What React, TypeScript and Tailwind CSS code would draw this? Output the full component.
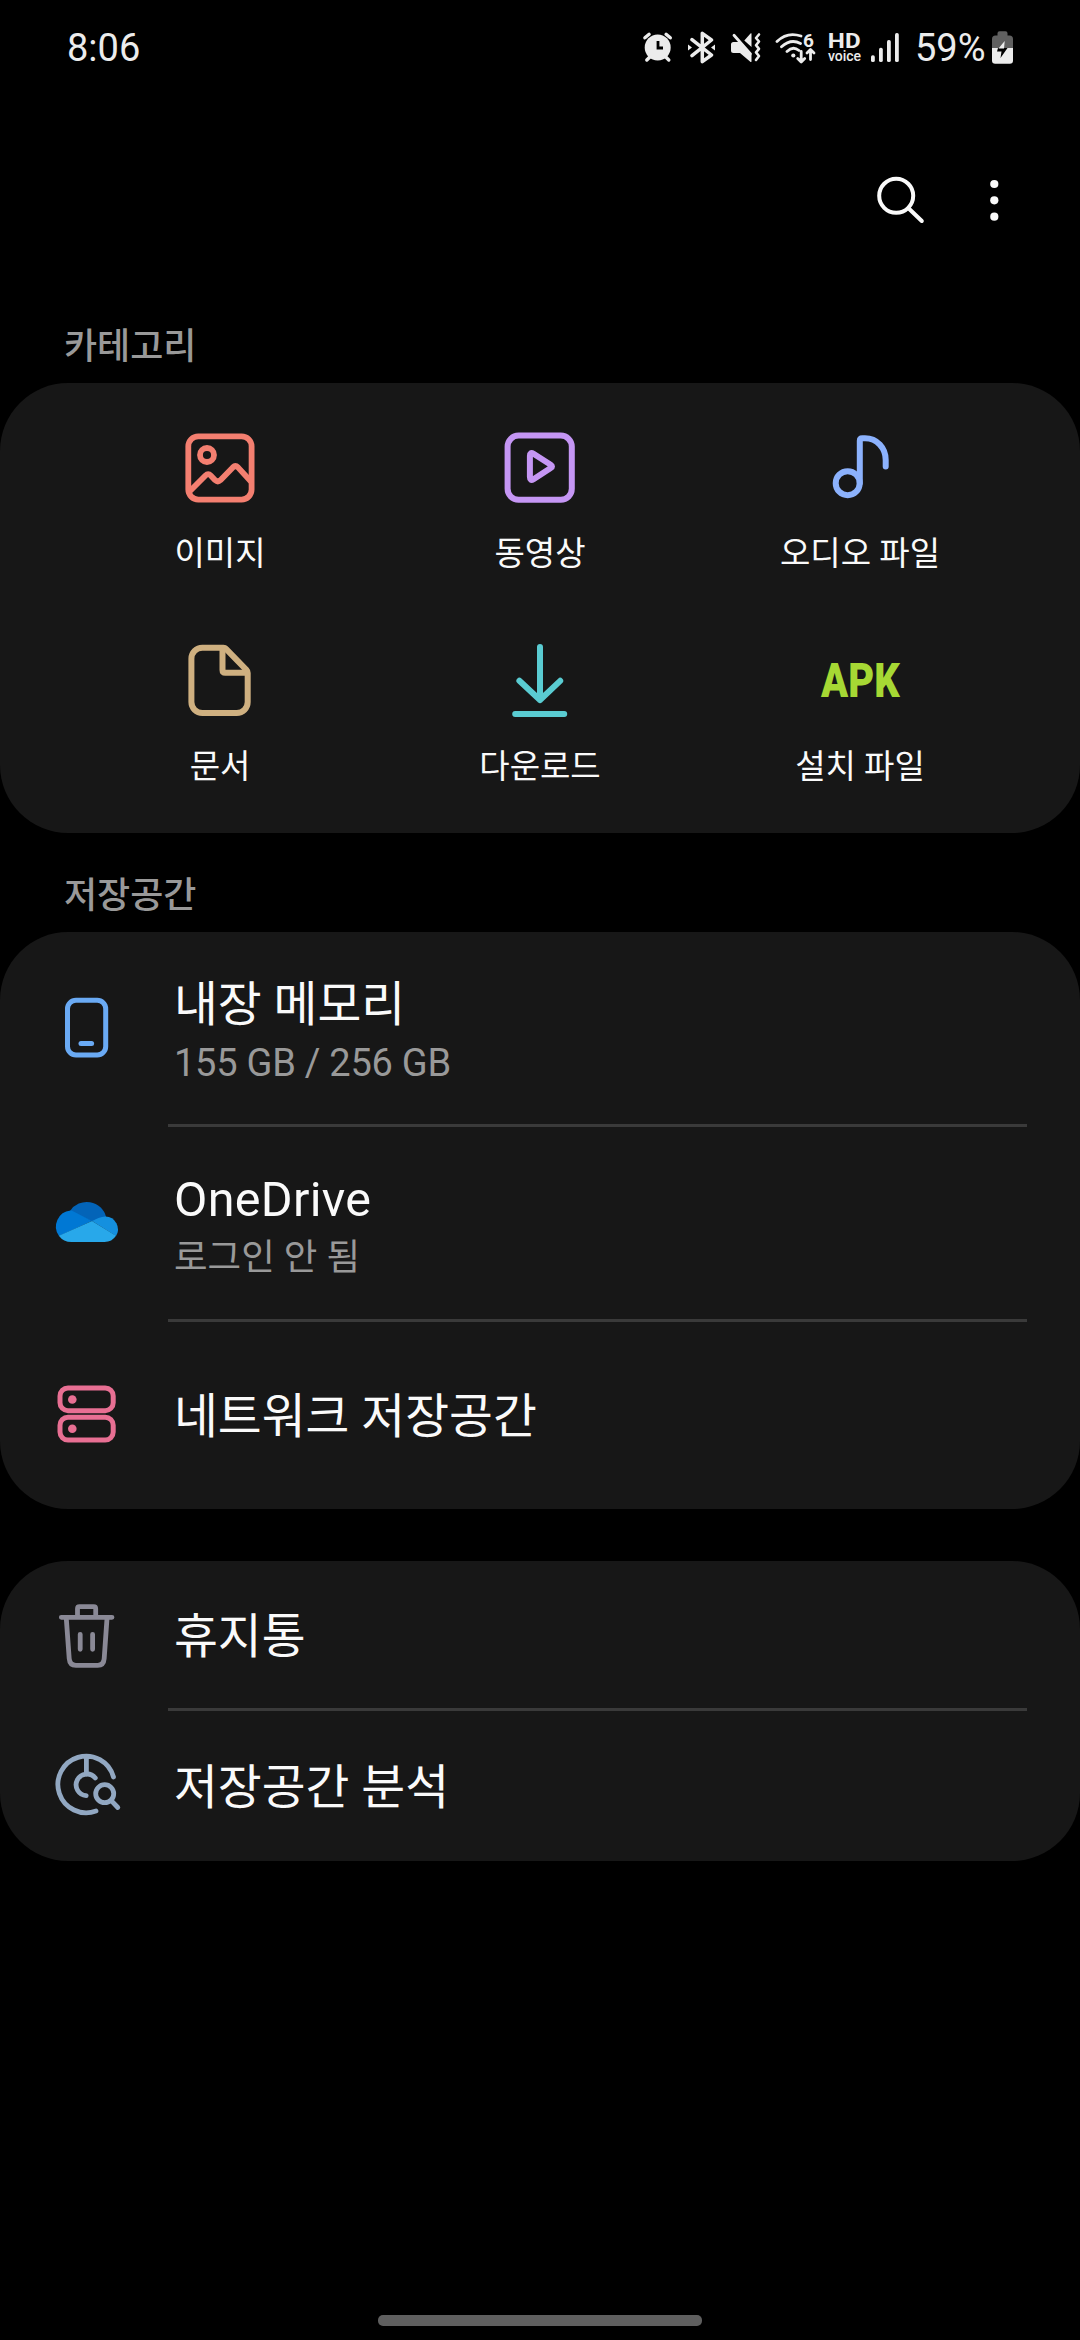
import React from 'react';

type CategoryItem = { label: string; icon: React.ReactNode };

const stroke = {
  fill: 'none',
  stroke: 'currentColor',
  strokeLinecap: 'round',
  strokeLinejoin: 'round',
} as const;

const categories: CategoryItem[] = [
  {
    label: '이미지',
    icon: (
      <svg className="size-[90px] text-[#f47f70]" viewBox="0 0 90 90" {...stroke} strokeWidth={5.8}>
        <rect x="13.3" y="13.3" width="63.3" height="63.3" rx="10" />
        <circle cx="32" cy="32" r="7" />
        <path d="M15 68L30.5 52.5q2.700-2.600 5.200 0l4.500 4.700q2.600 2.400 5.200 0L57.800 44.400q2.600-2.500 5.200 0L75.500 58" />
      </svg>
    ),
  },
  {
    label: '동영상',
    icon: (
      <svg className="size-[90px] text-[#c596f4]" viewBox="0 0 90 90" {...stroke} strokeWidth={6}>
        <rect x="12.6" y="12.6" width="64.2" height="64.2" rx="11" />
        <path d="M34.9 33v21q0 4.400 3.600 2.200l17.200-11.200q2.600-1.600 0-3.200L38.500 30.700q-3.600-2.200-3.600 2.300z" />
      </svg>
    ),
  },
  {
    label: '오디오 파일',
    icon: (
      <svg className="size-[90px] text-[#8cb2fd]" viewBox="0 0 90 90" {...stroke} strokeWidth={6}>
        <circle cx="32.7" cy="60.2" r="12" />
        <path d="M44.8 60V17.8q0-2.500 2.500-2.500H50C62 15.300 70.700 25 70.700 37v6.600" />
      </svg>
    ),
  },
  {
    label: '문서',
    icon: (
      <svg className="size-[90px] text-[#cfb080]" viewBox="0 0 90 90" {...stroke} strokeWidth={6}>
        <path d="M48.5 11.7H27.4a11 11 0 0 0-11 11V66a11 11 0 0 0 11 11h34.3a11 11 0 0 0 11-11V37q0-1.800-1.300-3.200L51 12.800q-1-1.100-2.500-1.100z" />
        <path d="M47.5 13v21q0 2.800 2.800 2.800H71" />
      </svg>
    ),
  },
  {
    label: '다운로드',
    icon: (
      <svg className="size-[90px] text-[#5accd2]" viewBox="0 0 90 90" {...stroke} strokeWidth={6}>
        <path d="M45 11v53M24.4 44.800L45 64l20.200-19.200M20.200 78h49" />
      </svg>
    ),
  },
  {
    label: '설치 파일',
    icon: (
      <span className="flex h-[90px] scale-x-[0.83] items-center text-[48px] leading-[90px] font-black text-[#a6d834]">
        APK
      </span>
    ),
  },
];

const PhoneIcon = () => (
  <svg className="size-[72px] text-[#6aaaf4]" viewBox="0 0 72 72" {...stroke} strokeWidth={5}>
    <rect x="16.5" y="8.2" width="38.2" height="54.8" rx="8.5" />
    <path d="M30 51.4h10.6" />
  </svg>
);

const OneDriveIcon = () => (
  <svg className="size-[72px]" viewBox="0 0 72 72">
    <path fill="#0364b8" d="M19 24A20 20 0 0 1 55.2 30.2L41 34.5z" />
    <path fill="#0078d4" d="M41 34L8 49A16.2 16.2 0 0 1 19.5 23.4q1.5 0 3 1z" />
    <path fill="#1490df" d="M41 34l6.500-2.900q3.500-1.500 7-1.500A12.700 12.700 0 0 1 65 49z" />
    <path fill="#28a8ea" d="M41 34l24 14.800Q61 55 53.500 55h-33Q12.500 55 7.800 48.700z" />
  </svg>
);

const ServerIcon = () => (
  <svg className="size-[72px] text-[#e86f93]" viewBox="0 0 72 72" {...stroke} strokeWidth={5}>
    <rect x="9" y="8" width="53.2" height="22.7" rx="8" />
    <rect x="9" y="37.2" width="53.2" height="22.8" rx="8" />
    <circle cx="21.3" cy="19.5" r="4.3" fill="currentColor" stroke="none" />
    <circle cx="21.3" cy="48.7" r="4.3" fill="currentColor" stroke="none" />
  </svg>
);

const TrashIcon = () => (
  <svg className="size-[72px] text-[#8a8996]" viewBox="0 0 72 72" {...stroke} strokeWidth={4.8}>
    <path d="M10.3 17.3H61M26.500 16V8.700q0-2 2-2h14.200q2 0 2 2V16" />
    <path d="M15.3 18.500l2.900 40q.5 6.800 6.700 6.800h21.800q6 0 6.500-6.800l2.800-40" />
    <path d="M29.2 34.300v15M41.600 34.300v15" />
  </svg>
);

const AnalysisIcon = () => (
  <svg className="size-[72px] text-[#92a8c2]" viewBox="0 0 72 72" {...stroke} strokeWidth={4.8}>
    <path d="M62.5 27A28.300 28.300 0 1 0 45 61M35.400 7v17" />
    <path d="M44.3 28A10.800 10.800 0 1 0 35.200 45.600" />
    <circle cx="53.7" cy="43.7" r="9" />
    <path d="M60.5 50.800l6.300 6.700" />
  </svg>
);

const StatusBar = () => (
  <div className="flex h-[96px] items-center justify-between pr-[67px] pl-[67px] text-[38px] leading-none text-[#ececec]">
    <span>8:06</span>
    <div className="flex items-center">
      <svg className="h-[34px] w-[32px]" viewBox="0 0 32 34" {...stroke} strokeWidth={3.4}>
        <circle cx="15.7" cy="16.5" r="13" fill="currentColor" stroke="none" />
        <path d="M2.9 6.800l4.200-3.500M28.300 6.800l-4.200-3.500M4.800 29l3-3M26.800 29l-3-3" />
        <path d="M16 10v7h5" stroke="#000" strokeWidth={2.8} strokeLinecap="butt" strokeLinejoin="miter" />
      </svg>
      <svg className="ml-[12px] h-[34px] w-[32px]" viewBox="0 0 32 34" {...stroke} strokeWidth={3.5}>
        <path d="M6 24.600L25.500 9 16.300 2.300v28.400L25.500 24 6 8.600" />
        <path d="M2 13.500l4 3-4 3zM29 13.500l-4 3 4 3z" fill="currentColor" stroke="none" />
      </svg>
      <svg className="ml-[12px] h-[34px] w-[32px]" viewBox="0 0 32 34" {...stroke} strokeWidth={2.8}>
        <path d="M3.5 11H9L21.500 24v6.500q-.5 1-1.500 0L10 22H3.500Q1 22 1 19.500v-6Q1 11 3.500 11zM21.500 2.500V16L14.300 9.500 20.500 2.500q.7-.7 1 0z" fill="currentColor" stroke="none" />
        <path d="M4 4.300L20.500 23" />
        <path d="M29 3.500L26 7l3 3.500-3 3.700 3 3.600-3 3.600 3 3.600-3 4" strokeWidth={2.6} />
      </svg>
      <svg className="ml-[12px] h-[34px] w-[44px]" viewBox="0 0 44 34" {...stroke} strokeWidth={2.8}>
        <path d="M3 10.500C10 3.500 18 2 27 5M7.500 15.800c5.500-5 12.500-6.800 19-3.300M13 20.500c3.500-3.500 8-4.200 12-1" />
        <circle cx="19.3" cy="24.5" r="2.1" fill="currentColor" stroke="none" />
        <path d="M27.2 20.500V30M23.700 27.500l3.500 3.500 3.500-3.500M36.500 28.500V19M33 22l3.500-3.500L40 22" />
        <text x="29" y="15.500" fill="currentColor" stroke="none" fontFamily="Roboto, sans-serif" fontWeight="700" fontSize="19">
          6
        </text>
      </svg>
      <div className="ml-[10px] flex w-[33px] flex-col items-center">
        <span className="h-[17px] scale-x-[1.15] text-[21px] leading-[17px] font-bold">HD</span>
        <span className="h-[13px] text-[14px] leading-[13px] font-medium">voice</span>
      </div>
      <svg className="ml-[9px] h-[34px] w-[30px]" viewBox="0 0 30 34" fill="currentColor">
        <rect x="1" y="24.3" width="3.8" height="6.8" rx="1.7" />
        <rect x="9" y="16.7" width="3.8" height="14.4" rx="1.7" />
        <rect x="17" y="9" width="3.8" height="22.1" rx="1.7" />
        <rect x="25" y="2" width="3.8" height="29.1" rx="1.7" />
      </svg>
      <span className="ml-[15px] w-[77px] whitespace-nowrap">59%</span>
      <svg className="h-[34px] w-[21px]" viewBox="0 0 21 34">
        <path fill="#606060" d="M5.5 2.300Q5.500.3 7.500.3h6q2 0 2 2V4.500h2q3.500 0 3.500 3.500V17H0V8Q0 4.500 3.500 4.500h2z" />
        <path fill="#ececec" d="M0 17h21v12.500q0 3.200-3.200 3.200H3.200Q0 32.700 0 29.500z" />
        <path fill="#000" d="M6 17H15.500L8.500 27l1-6.500H5z" />
        <path fill="#ececec" d="M12.7 10L6.500 17.500H12z" />
      </svg>
    </div>
  </div>
);

const Toolbar = () => (
  <div className="flex h-[187px] items-center justify-end pt-[20px] pr-[66px]">
    <svg className="size-[60px] text-[#fafafa]" viewBox="0 0 60 60" {...stroke} strokeWidth={4}>
      <circle cx="26.2" cy="25.8" r="17" />
      <path d="M38.5 38.200L51.800 51" />
    </svg>
    <svg className="ml-[44px] h-[60px] w-[40px] text-[#fafafa]" viewBox="0 0 40 60" fill="currentColor">
      <circle cx="20.3" cy="14" r="4.1" />
      <circle cx="20.3" cy="30.3" r="4.1" />
      <circle cx="20.3" cy="46.7" r="4.1" />
    </svg>
  </div>
);

const SectionTitle = ({ children, className }: { children: React.ReactNode; className: string }) => (
  <h2 className={`flex items-end pb-[14px] pl-[64px] text-[36px] leading-[44px] font-medium text-[#999999] ${className}`}>
    {children}
  </h2>
);

const Divider = () => <div className="mr-[53px] ml-[168px] h-[3px] bg-[#3a3a3a]" />;

interface RowProps {
  icon: React.ReactNode;
  title: string;
  subtitle?: string;
  className: string;
  titleClass?: string;
  subtitleClass?: string;
}

const Row = ({ icon, title, subtitle, className, titleClass = 'text-[47.7px]', subtitleClass = '' }: RowProps) => (
  <div className={`flex items-center gap-[51px] pl-[51px] ${className}`}>
    {icon}
    <div className={subtitle ? 'pt-[10px]' : 'pt-[3px]'}>
      <div className={`leading-[60px] text-[#fafafa] ${titleClass}`}>{title}</div>
      {subtitle && <div className={`leading-[56px] text-[#999999] ${subtitleClass}`}>{subtitle}</div>}
    </div>
  </div>
);

const App = () => {
  return (
    <div className="flex h-[2340px] w-[1080px] flex-col bg-black font-['Roboto','Noto_Sans_CJK_KR',sans-serif]">
      <StatusBar />
      <Toolbar />

      {/* Categories */}
      <SectionTitle className="h-[100px]">카테고리</SectionTitle>
      <div className="grid h-[450px] grid-cols-3 content-start gap-y-[62px] rounded-[68px] bg-[#171717] px-[60px] pt-[40px]">
        {categories.map((item) => (
          <div key={item.label} className="flex flex-col items-center gap-[21px]">
            {item.icon}
            <span className="text-[33px] leading-[40px] text-[#fafafa]">{item.label}</span>
          </div>
        ))}
      </div>

      {/* Storage */}
      <SectionTitle className="h-[99px]">저장공간</SectionTitle>
      <div className="rounded-[68px] bg-[#171717]">
        <Row
          className="h-[192px]"
          icon={<PhoneIcon />}
          title="내장 메모리"
          subtitle="155 GB / 256 GB"
          subtitleClass="text-[38px] tracking-[-0.25px]"
        />
        <Divider />
        <Row
          className="h-[192px]"
          icon={<OneDriveIcon />}
          title="OneDrive"
          titleClass="text-[48.5px] tracking-[0.3px]"
          subtitle="로그인 안 됨"
          subtitleClass="text-[36.5px]"
        />
        <Divider />
        <Row className="h-[187px]" icon={<ServerIcon />} title="네트워크 저장공간" />
      </div>

      {/* Trash and analysis */}
      <div className="mt-[52px] rounded-[68px] bg-[#171717]">
        <Row className="h-[147px] pt-[2px]" icon={<TrashIcon />} title="휴지통" />
        <Divider />
        <Row className="h-[150px]" icon={<AnalysisIcon />} title="저장공간 분석" />
      </div>

      <div className="mx-auto mt-auto mb-[14px] h-[11px] w-[324px] rounded-[5px] bg-[#5f5f5f]" />
    </div>
  );
};

export default App;
